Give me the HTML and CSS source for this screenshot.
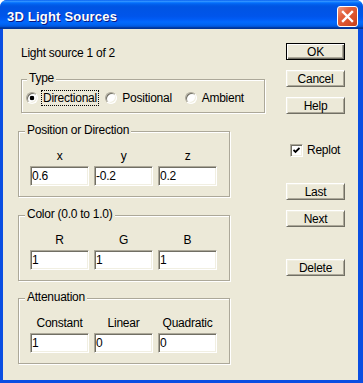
FILE: index.html
```html
<!DOCTYPE html>
<html lang="en">

<head>
  <meta charset="UTF-8">
  <title>3D Light Sources</title>
  <link rel="stylesheet" href="styles.css">
</head>

<body>

  <div class="window">
    <div class="titlebar">
      <span class="title">3D Light Sources</span>
      <button class="close" type="button" aria-label="Close">
        <svg width="13" height="13" viewBox="0 0 13 13">
          <path d="M2 2 L11 11 M11 2 L2 11" stroke="#fff" stroke-width="2.4" stroke-linecap="square" fill="none"/>
        </svg>
      </button>
    </div>

    <div class="client">
      <div class="main">
        <p class="caption">Light source 1 of 2</p>

        <div class="group type-group">
          <span class="legend">Type</span>
          <div class="radios">
            <label class="radio"><span class="dot checked"></span><span class="label focus">Directional</span></label>
            <label class="radio"><span class="dot"></span><span class="label">Positional</span></label>
            <label class="radio"><span class="dot"></span><span class="label">Ambient</span></label>
          </div>
        </div>

        <div class="group fields">
          <span class="legend">Position or Direction</span>
          <div class="grid">
            <span>x</span><span>y</span><span>z</span>
            <input type="text" value="0.6">
            <input type="text" value="-0.2">
            <input type="text" value="0.2">
          </div>
        </div>

        <div class="group fields">
          <span class="legend">Color (0.0 to 1.0)</span>
          <div class="grid">
            <span>R</span><span>G</span><span>B</span>
            <input type="text" value="1">
            <input type="text" value="1">
            <input type="text" value="1">
          </div>
        </div>

        <div class="group fields last-group">
          <span class="legend">Attenuation</span>
          <div class="grid">
            <span>Constant</span><span>Linear</span><span>Quadratic</span>
            <input type="text" value="1">
            <input type="text" value="0">
            <input type="text" value="0">
          </div>
        </div>
      </div>

      <div class="side">
        <button type="button" class="btn default">OK</button>
        <button type="button" class="btn gap">Cancel</button>
        <button type="button" class="btn gap">Help</button>

        <label class="check">
          <span class="box">
            <svg width="7" height="7" viewBox="0 0 7 7">
              <path d="M0.5 3 L2.5 5 L6.5 1" stroke="#000" stroke-width="1.8" fill="none"/>
            </svg>
          </span>
          Replot
        </label>

        <button type="button" class="btn after-check">Last</button>
        <button type="button" class="btn gap">Next</button>
        <button type="button" class="btn delete">Delete</button>
      </div>
    </div>
  </div>

</body>

</html>
```

FILE: styles.css
```css
body {
  margin: 0;
  background: #fff;
  font-family: "Liberation Sans", Arial, sans-serif;
  font-size: 12px;
  color: #000;
}

.window {
  width: 363px;
  height: 383px;
  display: flex;
  flex-direction: column;
  background: #0a4ee2;
  border-radius: 7px 7px 0 0;
  overflow: hidden;
}

.titlebar {
  height: 29px;
  box-sizing: border-box;
  padding: 3px 5px 0 7px;
  display: flex;
  align-items: center;
  justify-content: space-between;
  background: linear-gradient(to bottom, #0058ee 0%, #3593ff 4%, #288eff 6%, #127dff 8%, #036ffc 10%, #0262ee 14%, #0057e5 20%, #0054e3 24%, #0055eb 56%, #005bf5 66%, #026afe 76%, #0062ef 86%, #0052d6 92%, #0040ab 94%, #003092 100%);
}

.title {
  color: #fff;
  font-weight: bold;
  font-size: 13px;
  letter-spacing: 0.2px;
  text-shadow: 1px 1px #0a1883;
}

.close {
  width: 21px;
  height: 21px;
  padding: 0;
  display: flex;
  align-items: center;
  justify-content: center;
  border: 1px solid #fff;
  border-radius: 3px;
  background: linear-gradient(135deg, #f39a7e 0%, #e2603c 35%, #d8502a 70%, #c23d18 100%);
}

.client {
  flex: 1;
  margin: 0 5px 3px 3px;
  padding: 0 13px 0 15px;
  display: flex;
  align-items: flex-start;
  background: #ece9d8;
}

.main {
  padding-top: 17px;
  display: flex;
  flex-direction: column;
  align-items: flex-start;
  letter-spacing: -0.25px;
}

.caption {
  margin: 0 0 0 3px;
  line-height: 14px;
}

.group {
  position: relative;
  box-sizing: border-box;
  border: 1px solid #aca899;
  box-shadow: inset 1px 1px #fff, 1px 1px #fff;
}

.legend {
  position: absolute;
  top: -9px;
  left: 6px;
  padding: 0 2px;
  line-height: 14px;
  background: #ece9d8;
}

.type-group {
  margin: 19px 0 0 3px;
  width: 244px;
  height: 34px;
  padding: 10px 0 0 4px;
}

.type-group .legend {
  left: 5px;
}

.radios {
  display: flex;
}

.radio {
  width: 80px;
  display: flex;
  align-items: center;
}

.dot {
  width: 12px;
  height: 12px;
  box-sizing: border-box;
  border-radius: 50%;
  border: 1px solid;
  border-color: #aca899 #fff #fff #aca899;
  box-shadow: inset 1px 1px #716f64, inset -1px -1px #f1efe2;
  background: #fff;
}

.dot.checked {
  background: radial-gradient(circle, #000 0, #000 2px, #fff 2.6px);
}

.label {
  margin-left: 3px;
  padding: 0 1px;
  line-height: 14px;
  border: 1px solid transparent;
}

.label.focus {
  border: 1px dotted #000;
}

.fields {
  width: 212px;
  height: 66px;
  margin-top: 18px;
  padding: 17px 0 0 11px;
}

.last-group {
  margin-top: 17px;
}

.grid {
  display: grid;
  grid-template-columns: repeat(3, 59px);
  column-gap: 5px;
  row-gap: 3px;
}

.grid span {
  text-align: center;
  line-height: 14px;
}

.grid input {
  width: 59px;
  height: 20px;
  box-sizing: border-box;
  margin: 0;
  padding: 0 1px;
  font: inherit;
  letter-spacing: -0.25px;
  color: #000;
  background: #fff;
  border: 1px solid;
  border-color: #aca899 #fff #fff #aca899;
  box-shadow: inset 1px 1px #716f64, inset -1px -1px #f1efe2;
  outline: none;
}

.side {
  width: 59px;
  margin-left: auto;
  padding-top: 14px;
  display: flex;
  flex-direction: column;
  letter-spacing: -0.25px;
}

.btn {
  width: 59px;
  height: 17px;
  padding: 0;
  font: inherit;
  letter-spacing: -0.25px;
  color: #000;
  background: #ece9d8;
  border: 1px solid;
  border-color: #fff #716f64 #716f64 #fff;
  box-shadow: inset 1px 1px #f1efe2, inset -1px -1px #aca899;
}

.btn.default {
  border-color: #000;
  box-shadow: inset 1px 1px #fff, inset -1px -1px #716f64, inset -2px -2px #aca899;
}

.btn.gap {
  margin-top: 10px;
}

.btn.after-check {
  margin-top: 26px;
}

.btn.delete {
  margin-top: 32px;
}

.check {
  margin: 30px 0 0 4px;
  display: flex;
  align-items: center;
  gap: 4px;
  line-height: 13px;
}

.box {
  width: 13px;
  height: 13px;
  box-sizing: border-box;
  display: flex;
  align-items: center;
  justify-content: center;
  background: #fff;
  border: 1px solid;
  border-color: #aca899 #fff #fff #aca899;
  box-shadow: inset 1px 1px #716f64, inset -1px -1px #f1efe2;
}
```
